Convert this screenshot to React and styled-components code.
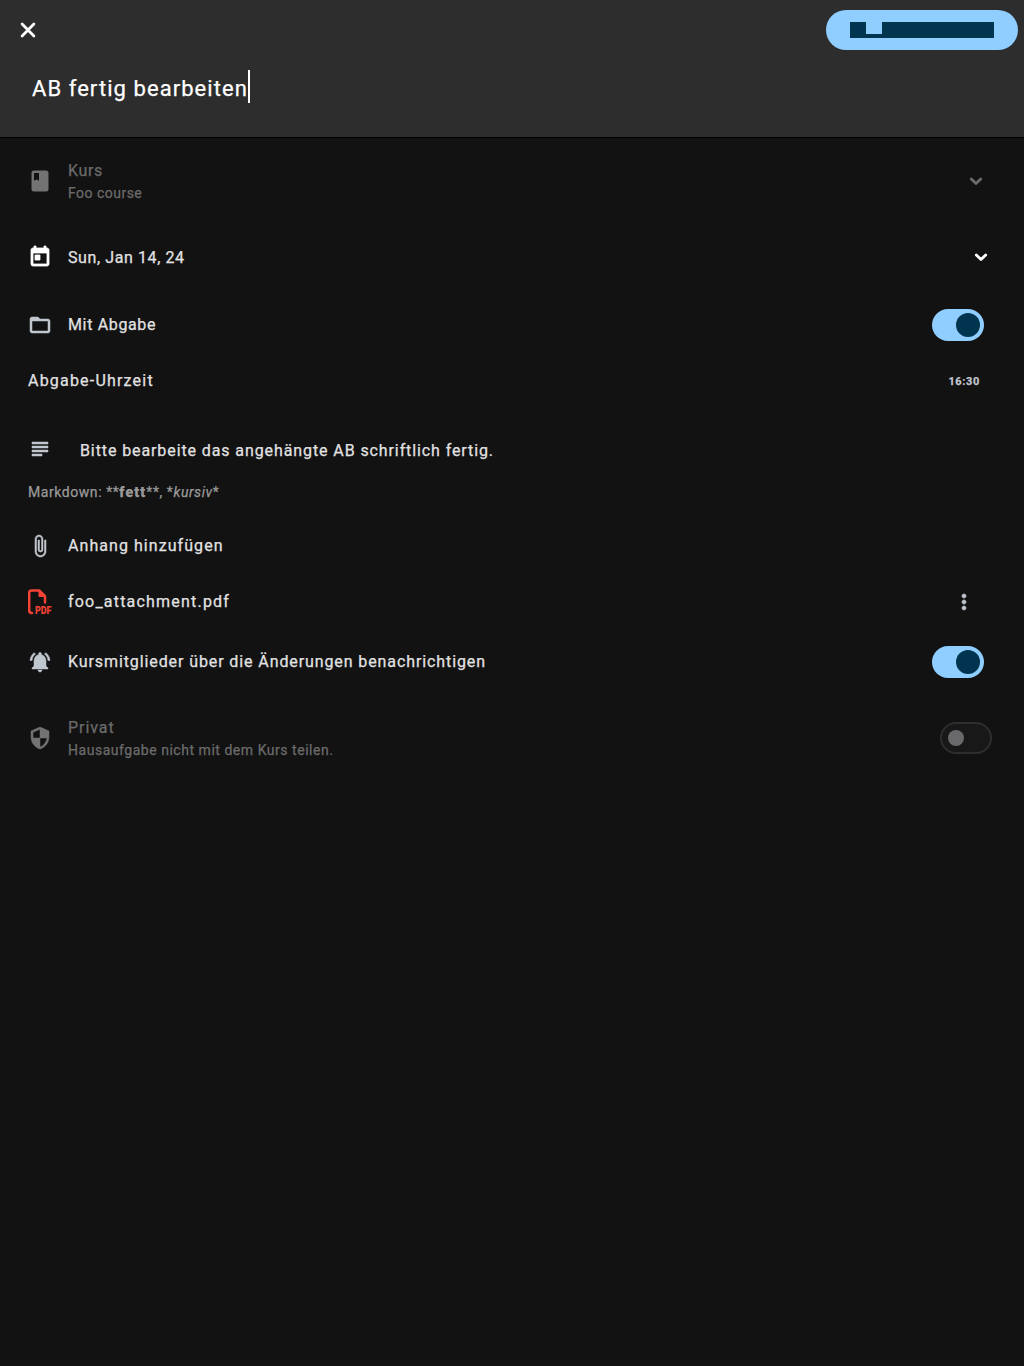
import React from "react";
import styled, { createGlobalStyle } from "styled-components";
import {
  MdToday,
  MdFolderOpen,
  MdSubject,
  MdAttachFile,
  MdNotificationsActive,
  MdSecurity,
  MdMoreVert,
} from "react-icons/md";

const GlobalStyle = createGlobalStyle`
  *, *::before, *::after { box-sizing: border-box; }
  body {
    margin: 0;
    background: #121212;
    color: #e2e2e2;
    font-family: Roboto, "Liberation Sans", sans-serif;
    -webkit-text-stroke: 0.25px currentColor;
  }
`;

const Page = styled.div`
  min-height: 1366px;
  display: flex;
  flex-direction: column;
`;

const Header = styled.header`
  height: 138px;
  display: flex;
  flex-direction: column;
  background: #2d2d2d;
  border-bottom: 1px solid #000;
`;

const Toolbar = styled.div`
  height: 60px;
  padding: 0 6px 0 16px;
  display: flex;
  align-items: center;
  justify-content: space-between;
`;

const IconButton = styled.button`
  display: flex;
  padding: 0;
  border: 0;
  background: none;
  color: inherit;
`;

const SaveButton = styled.button`
  width: 192px;
  height: 40px;
  padding: 0 24px;
  display: flex;
  align-items: center;
  border: 0;
  border-radius: 20px;
  background: #8fceff;
`;

const Blocks = styled.span`
  display: flex;
  height: 16px;
  align-items: flex-end;
`;

const Block = styled.span`
  width: ${(p) => p.$w}px;
  height: ${(p) => p.$h}px;
  background: #00344f;
`;

const TitleField = styled.div`
  padding: 10px 32px 0;
  display: flex;
  align-items: center;
`;

const Title = styled.span`
  height: 33px;
  padding-top: 2px;
  font-size: 22px;
  line-height: 33px;
  letter-spacing: 1.06px;
  color: #fff;
  white-space: nowrap;
`;

const Caret = styled.span`
  width: 2px;
  height: 33px;
  background: #fff;
`;

const Row = styled.div`
  height: ${(p) => p.$h}px;
  margin-top: ${(p) => p.$mt || 0}px;
  padding: 0 ${(p) => p.$right || 40}px 0 28px;
  display: flex;
  align-items: center;
  color: ${(p) => (p.$disabled ? "#6b6b6b" : "#e2e2e2")};
`;

const Glyph = styled.span`
  display: flex;
  color: ${(p) => p.$color || "#c1c7ce"};

  svg {
    stroke-linejoin: round;
    stroke-width: ${(p) => p.$bold || 0};
  }

  path[fill="none"] {
    stroke: none;
  }
`;

const Leading = styled(Glyph)`
  width: ${(p) => p.$w || 40}px;
  padding-top: ${(p) => p.$drop || 0}px;
  padding-bottom: ${(p) => p.$lift || 0}px;
`;

const Labels = styled.div`
  flex: 1;
  display: flex;
  flex-direction: column;
  padding-top: ${(p) => p.$drop || 0}px;
`;

const Label = styled.span`
  font-size: 16px;
  line-height: 24px;
  letter-spacing: ${(p) => p.$ls}px;
  white-space: nowrap;
`;

const Sub = styled.span`
  font-size: 14px;
  line-height: 21px;
  letter-spacing: ${(p) => p.$ls}px;
  white-space: nowrap;
`;

const Hint = styled(Sub)`
  color: #9a9a9a;

  b {
    font-weight: 900;
    letter-spacing: 1.2px;
  }
`;

const Time = styled.span`
  font-size: 11px;
  font-weight: 700;
  letter-spacing: 0.65px;
  color: #c1c7ce;
`;

const Track = styled.span`
  width: 52px;
  height: 32px;
  padding: 0 ${(p) => (p.$on ? 4 : 6)}px;
  display: flex;
  align-items: center;
  justify-content: ${(p) => (p.$on ? "flex-end" : "flex-start")};
  border: ${(p) => (p.$on ? "0" : "2px solid #2e2e2e")};
  border-radius: 16px;
  background: ${(p) => (p.$on ? "#8fceff" : "#181818")};
`;

const Thumb = styled.span`
  width: ${(p) => (p.$on ? 24 : 16)}px;
  height: ${(p) => (p.$on ? 24 : 16)}px;
  border-radius: 50%;
  background: ${(p) => (p.$on ? "#00344f" : "#69696b")};
`;

const Switch = ({ on }) => (
  <Track $on={on}>
    <Thumb $on={on} />
  </Track>
);

const CloseIcon = () => (
  <svg width="24" height="24" viewBox="0 0 24 24" fill="none" stroke="#fff" strokeWidth="2.8" strokeLinecap="round">
    <path d="M6.1 6.1l11.8 11.8M17.9 6.1L6.1 17.9" />
  </svg>
);

const BookIcon = () => (
  <svg width="24" height="24" viewBox="0 0 24 24" fill="currentColor">
    <path
      fillRule="evenodd"
      d="M6 1.5H18Q20.5 1.5 20.5 4V20Q20.5 22.5 18 22.5H6Q3.5 22.5 3.5 20V4Q3.5 1.5 6 1.5zM6 4V11.8L8.5 10.4L11 11.8V4z"
    />
  </svg>
);

const Chevron = ({ color }) => (
  <svg width="24" height="24" viewBox="0 0 24 24" fill="none" stroke={color} strokeWidth="2.8" strokeLinecap="round" strokeLinejoin="round">
    <path d="M7.3 9.9l4.7 4.7L16.7 9.9" />
  </svg>
);

const PdfSlot = styled.span`
  width: 40px;
  display: flex;
`;

const PdfLabel = styled.text`
  font: 900 10px Roboto, "Liberation Sans", sans-serif;
  fill: #f44336;
`;

const PdfIcon = () => (
  <svg width="24" height="26" viewBox="0 0 24 26">
    <g fill="none" stroke="#f44336" strokeLinecap="round" strokeLinejoin="round">
      <path strokeWidth="2.5" d="M4 24H3.6Q1.2 24 1.2 21.6V4Q1.2 1.6 3.6 1.6H11.5L17 7.2V13.5" />
      <path fill="#f44336" strokeWidth="1" d="M11 1.8V7.5H17z" />
    </g>
    <PdfLabel x="7" y="25" textLength="16.5" lengthAdjust="spacingAndGlyphs">
      PDF
    </PdfLabel>
  </svg>
);

export default function App() {
  return (
    <Page>
      <GlobalStyle />
      <Header>
        <Toolbar>
          <IconButton aria-label="Schließen">
            <CloseIcon />
          </IconButton>
          <SaveButton aria-label="Speichern">
            <Blocks>
              <Block $w={16} $h={16} />
              <Block $w={16} $h={4} />
              <Block $w={112} $h={16} />
            </Blocks>
          </SaveButton>
        </Toolbar>
        <TitleField>
          <Title>AB fertig bearbeiten</Title>
          <Caret />
        </TitleField>
      </Header>

      <Row $h={86} $right={36} $disabled>
        <Leading $color="#737373">
          <BookIcon />
        </Leading>
        <Labels>
          <Label $ls={0.6}>Kurs</Label>
          <Sub $ls={0.48}>Foo course</Sub>
        </Labels>
        <Chevron color="#6b6b6b" />
      </Row>

      <Row $h={66} $right={31}>
        <Leading $color="#fff" $bold={0.8}>
          <MdToday size={24} />
        </Leading>
        <Labels $drop={1}>
          <Label $ls={0.6}>Sun, Jan 14, 24</Label>
        </Labels>
        <Chevron color="#fff" />
      </Row>

      <Row $h={70}>
        <Leading $bold={0.5}>
          <MdFolderOpen size={24} />
        </Leading>
        <Labels>
          <Label $ls={0.65}>Mit Abgabe</Label>
        </Labels>
        <Switch on />
      </Row>

      <Row $h={42} $right={44}>
        <Labels>
          <Label $ls={1.2}>Abgabe-Uhrzeit</Label>
        </Labels>
        <Time>16:30</Time>
      </Row>

      <Row $h={48} $mt={24}>
        <Leading $w={52} $lift={2} $bold={0.5}>
          <MdSubject size={24} />
        </Leading>
        <Labels $drop={2}>
          <Label $ls={0.9}>Bitte bearbeite das angehängte AB schriftlich fertig.</Label>
        </Labels>
      </Row>

      <Row $h={36}>
        <Hint $ls={0.56}>
          Markdown: **<b>fett</b>**, *<i>kursiv</i>*
        </Hint>
      </Row>

      <Row $h={56} $mt={7}>
        <Leading $bold={0.5} $drop={2}>
          <MdAttachFile size={24} />
        </Leading>
        <Labels $drop={2}>
          <Label $ls={1.06}>Anhang hinzufügen</Label>
        </Labels>
      </Row>

      <Row $h={58} $right={48}>
        <PdfSlot>
          <PdfIcon />
        </PdfSlot>
        <Labels>
          <Label $ls={1.2}>foo_attachment.pdf</Label>
        </Labels>
        <Glyph $bold={0.7}>
          <MdMoreVert size={24} />
        </Glyph>
      </Row>

      <Row $h={62}>
        <Leading $bold={0.5}>
          <MdNotificationsActive size={24} />
        </Leading>
        <Labels>
          <Label $ls={0.9}>Kursmitglieder über die Änderungen benachrichtigen</Label>
        </Labels>
        <Switch on />
      </Row>

      <Row $h={90} $right={32} $disabled>
        <Leading $color="#737373" $bold={0.5}>
          <MdSecurity size={24} />
        </Leading>
        <Labels>
          <Label $ls={0.95}>Privat</Label>
          <Sub $ls={0.53}>Hausaufgabe nicht mit dem Kurs teilen.</Sub>
        </Labels>
        <Switch />
      </Row>
    </Page>
  );
}
